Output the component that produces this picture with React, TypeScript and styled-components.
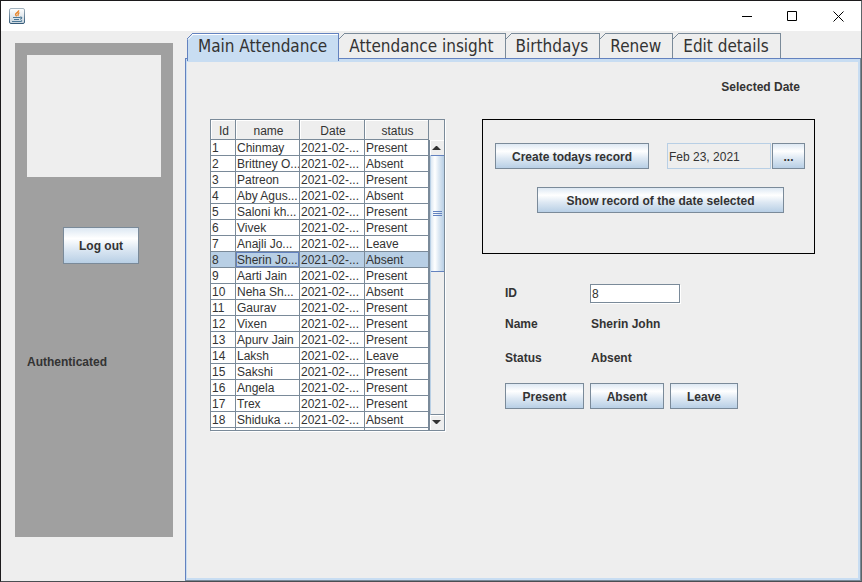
import React, { useState } from "react";
import styled, { createGlobalStyle, css } from "styled-components";

const line = "#7a8a99";
const blue = "#6382bf";
const panel = "#eeeeee";
const ink = "#333333";
const selection = "#b8cfe5";
const tabFill = "#c8ddf2";

const GlobalStyle = createGlobalStyle`
  *, *::before, *::after { box-sizing: border-box; }
  body { margin: 0; background: ${panel}; }
  body, button, input { font: 12px/16px "Liberation Sans", Arial, sans-serif; color: ${ink}; }
  button { cursor: default; }
`;

const Window = styled.div`
  display: flex;
  flex-direction: column;
  min-height: 100vh;
  background: ${panel};
  border: 1px solid #1c1a1c;
  border-right-color: #5c6468;
  border-bottom-color: #4a4e52;
`;

const TitleBar = styled.header`
  display: flex;
  align-items: center;
  justify-content: space-between;
  height: 30px;
  padding-left: 8px;
  background: #ffffff;
`;

const WindowButtons = styled.div`
  display: flex;
`;

const WindowButton = styled.button`
  display: flex;
  align-items: center;
  justify-content: center;
  width: 46px;
  height: 30px;
  padding: 0;
  border: 0;
  background: transparent;
`;

const Body = styled.div`
  display: flex;
  flex: 1;
`;

const Sidebar = styled.aside`
  display: flex;
  flex-direction: column;
  flex: none;
  width: 158px;
  margin: 12px 12px 44px 14px;
  padding: 12px;
  background: #a0a0a0;
`;

const Photo = styled.div`
  height: 122px;
  margin-bottom: 50px;
  background: ${panel};
`;

const AuthStatus = styled.p`
  margin: 90px 0 0;
  font-weight: bold;
`;

const Button = styled.button<{ $width: number; $tall?: boolean }>`
  flex: none;
  width: ${(p) => p.$width}px;
  height: ${(p) => (p.$tall ? 37 : 26)}px;
  padding: ${(p) => (p.$tall ? 0 : 2)}px 0 0;
  border: 1px solid ${line};
  background: linear-gradient(#dde8f3, #ffffff 30%, #dde8f3 60%, #b8cfe5);
  font-weight: bold;
`;

const LogOutButton = styled(Button)`
  margin-left: 36px;
`;

const Main = styled.main`
  display: flex;
  flex-direction: column;
  flex: 1;
  min-width: 0;
  padding-top: 2px;
`;

const TabList = styled.div`
  display: flex;
  padding-left: 2px;
`;

const Tab = styled.button<{ $active: boolean }>`
  position: relative;
  height: 25px;
  padding: 0 11px 0 10px;
  border: 0;
  border-top: 1px solid ${line};
  border-right: 1px solid ${line};
  background: ${panel};
  font: 17px/24px "DejaVu Sans Condensed", "Noto Sans", sans-serif;
  white-space: nowrap;
  ${(p) =>
    p.$active &&
    css`
      z-index: 1;
      height: 28px;
      margin-bottom: -3px;
      padding-bottom: 3px;
      border-color: ${blue};
      background: ${tabFill};
      box-shadow: inset 0 1px #ffffff;
    `}
  &:first-child {
    border-left: 1px solid ${blue};
  }
`;

const TabCorner = styled.svg<{ $first: boolean }>`
  position: absolute;
  top: -1px;
  left: ${(p) => (p.$first ? -1 : 0)}px;
`;

const Pane = styled.section`
  flex: 1;
  padding: 16px 45px 16px 24px;
  border: 1px solid ${blue};
  border-right-color: ${line};
  border-bottom-color: ${line};
  box-shadow: inset 1px 0 ${tabFill}, inset 0 3px ${tabFill}, inset -2px -2px ${tabFill};
`;

const SelectedDate = styled.h2`
  margin: 4px 15px 24px 0;
  font-size: 12px;
  line-height: 16px;
  text-align: right;
`;

const Columns = styled.div`
  display: grid;
  grid-template-columns: 235px minmax(333px, 1fr);
  gap: 37px;
  align-items: start;
`;

const ScrollPane = styled.div`
  display: grid;
  grid-template-columns: 218px 15px;
  height: 312px;
  overflow: hidden;
  border: 1px solid ${line};
  box-shadow: 1px 1px #ffffff;
`;

const Viewport = styled.div`
  overflow: hidden;
  background: #ffffff;
`;

const Table = styled.table`
  width: 100%;
  table-layout: fixed;
  border-collapse: separate;
  border-spacing: 0;
`;

const Col = styled.col<{ $width: number }>`
  width: ${(p) => p.$width}px;
`;

const HeadCell = styled.th`
  height: 20px;
  padding: 2px 0 0 2px;
  border-right: 1px solid ${line};
  border-bottom: 1px solid ${line};
  background: ${panel};
  box-shadow: inset 1px 1px #ffffff;
  font-weight: normal;
  line-height: 16px;
`;

const Row = styled.tr<{ $selected: boolean }>`
  background: ${(p) => (p.$selected ? selection : "#ffffff")};
`;

const Cell = styled.td<{ $focused?: boolean }>`
  height: 16px;
  padding: 2px 0 0 1px;
  border-right: 1px solid ${line};
  border-bottom: 1px solid ${line};
  line-height: 13px;
  white-space: nowrap;
  overflow: hidden;
  box-shadow: ${(p) => (p.$focused ? `inset 0 0 0 1px ${blue}` : "none")};
`;

const ScrollColumn = styled.div`
  display: flex;
  flex-direction: column;
  min-height: 0;
`;

const ScrollCorner = styled.div`
  flex: none;
  height: 20px;
`;

const ScrollBar = styled.div`
  display: flex;
  flex-direction: column;
  flex: 1;
  border-left: 1px solid ${line};
`;

const ScrollButton = styled.button`
  display: flex;
  align-items: center;
  justify-content: center;
  height: 15px;
  padding: 0 1px 0 0;
  border: 0;
  background: ${panel};
  box-shadow: inset 1px 1px #ffffff;
`;

const ScrollTrack = styled.div`
  flex: 1;
  border-bottom: 1px solid ${line};
  border-left: 1px solid ${selection};
`;

const ScrollThumb = styled.div`
  display: flex;
  flex-direction: column;
  align-items: center;
  justify-content: center;
  gap: 1px;
  height: 117px;
  border: solid ${blue};
  border-width: 1px 0;
  background: linear-gradient(to right, #dde8f3, #ffffff 30%, #dde8f3 60%, #b8cfe5);
`;

const Grip = styled.span`
  width: 9px;
  height: 1px;
  background: ${blue};
`;

const RecordBox = styled.div`
  display: flex;
  flex-direction: column;
  gap: 18px;
  height: 135px;
  padding: 23px 9px 0 12px;
  border: 1px solid #000000;
`;

const SpreadRow = styled.div`
  display: flex;
  justify-content: space-between;
`;

const ShowRow = styled.div`
  display: flex;
  justify-content: flex-end;
  padding-right: 21px;
`;

const DatePicker = styled.div`
  display: flex;
  gap: 1px;
`;

const DateInput = styled.input`
  width: 104px;
  height: 26px;
  padding: 2px 1px 0;
  border: 1px solid ${selection};
  background: ${panel};
`;

const Form = styled.form`
  display: grid;
  grid-template-columns: 85px 1fr;
  grid-template-rows: 20px 42px 26px;
  align-items: center;
  margin: 29px 0 0 23px;
  font-weight: bold;
`;

const IdInput = styled.input`
  width: 90px;
  height: 19px;
  padding: 2px 1px 0;
  border: 1px solid ${line};
  background: #ffffff;
  box-shadow: 1px 1px #ffffff;
`;

const Value = styled.output`
  padding-left: 1px;
`;

const Actions = styled.div`
  display: flex;
  gap: 6px;
  margin: 12px 0 0 23px;
`;

const JavaIcon = () => (
  <svg width="16" height="16" viewBox="0 0 16 16" aria-hidden="true">
    <defs>
      <linearGradient id="plate" x1="0" y1="0" x2="0" y2="1">
        <stop offset="0" stopColor="#ffffff" />
        <stop offset="1" stopColor="#c9d5de" />
      </linearGradient>
      <linearGradient id="rim" x1="0" y1="0" x2="0" y2="1">
        <stop offset="0" stopColor="#a3b3bf" />
        <stop offset="1" stopColor="#355a78" />
      </linearGradient>
    </defs>
    <rect x=".5" y=".5" width="15" height="15" rx="1.5" fill="url(#plate)" stroke="url(#rim)" />
    <path d="M9.6 2.2C10.4 4 6.4 4.9 6.6 6.5c.1.8.7 1.2 1 1.9M10.4 4.6C8.2 5.4 9.8 6.6 8.7 8" fill="none" stroke="#e8862c" strokeWidth="1.4" />
    <path d="M4 9.5h7M5 11.5h5M11 9.3c2.4-.8 2.4 1.4 0 2M3 13.5h9l1-1" fill="none" stroke="#4c7896" strokeWidth="1.1" />
  </svg>
);

const Glyph = ({ d }: { d: string }) => (
  <svg width="11" height="11" viewBox="0 0 11 11" aria-hidden="true">
    <path d={d} fill="none" stroke="#000000" />
  </svg>
);

const Corner = ({ first, active }: { first: boolean; active: boolean }) => (
  <TabCorner $first={first} width="7" height="7" viewBox="0 0 7 7" aria-hidden="true">
    <path d="M0 0H6L0 6Z" fill={panel} />
    {active && <path d="M1 6.5L6.5 1" stroke="#ffffff" />}
    <path d="M0 6L6 0" stroke={active ? blue : line} />
  </TabCorner>
);

const windowButtons = [
  { label: "Minimize", d: "M1 5.5h10" },
  { label: "Maximize", d: "M.5 .5h9v9h-9z" },
  { label: "Close", d: "M.5 .5l10 10M10.5 .5l-10 10" },
];

const tabs = ["Main Attendance", "Attendance insight", "Birthdays", "Renew", "Edit details"];

const records: [string, string][] = [
  ["Chinmay", "Present"],
  ["Brittney O...", "Absent"],
  ["Patreon", "Present"],
  ["Aby Agus...", "Absent"],
  ["Saloni kh...", "Present"],
  ["Vivek", "Present"],
  ["Anajli Jo...", "Leave"],
  ["Sherin Jo...", "Absent"],
  ["Aarti Jain", "Present"],
  ["Neha Sh...", "Absent"],
  ["Gaurav", "Present"],
  ["Vixen", "Present"],
  ["Apurv Jain", "Present"],
  ["Laksh", "Leave"],
  ["Sakshi", "Present"],
  ["Angela", "Present"],
  ["Trex", "Present"],
  ["Shiduka ...", "Absent"],
  ["", ""],
];

export default function App() {
  const [tab, setTab] = useState(0);
  const [selected, setSelected] = useState(7);

  return (
    <>
      <GlobalStyle />
      <Window>
        <TitleBar>
          <JavaIcon />
          <WindowButtons>
            {windowButtons.map((b) => (
              <WindowButton key={b.label} aria-label={b.label}>
                <Glyph d={b.d} />
              </WindowButton>
            ))}
          </WindowButtons>
        </TitleBar>
        <Body>
          <Sidebar>
            <Photo />
            <LogOutButton $width={76} $tall>Log out</LogOutButton>
            <AuthStatus>Authenticated</AuthStatus>
          </Sidebar>
          <Main>
            <TabList role="tablist">
              {tabs.map((name, i) => (
                <Tab key={name} role="tab" aria-selected={i === tab} $active={i === tab} onClick={() => setTab(i)}>
                  <Corner first={i === 0} active={i === tab} />
                  {name}
                </Tab>
              ))}
            </TabList>
            <Pane role="tabpanel">
              <SelectedDate>Selected Date</SelectedDate>
              <Columns>
                <ScrollPane>
                  <Viewport>
                    <Table>
                      <colgroup>
                        <Col $width={25} />
                        <Col $width={64} />
                        <Col $width={65} />
                        <Col $width={64} />
                      </colgroup>
                      <thead>
                        <tr>
                          {["Id", "name", "Date", "status"].map((h) => (
                            <HeadCell key={h} scope="col">{h}</HeadCell>
                          ))}
                        </tr>
                      </thead>
                      <tbody>
                        {records.map(([name, status], i) => (
                          <Row key={i} $selected={i === selected} onClick={() => setSelected(i)}>
                            <Cell>{name && i + 1}</Cell>
                            <Cell $focused={i === selected}>{name}</Cell>
                            <Cell>{name && "2021-02-..."}</Cell>
                            <Cell>{status}</Cell>
                          </Row>
                        ))}
                      </tbody>
                    </Table>
                  </Viewport>
                  <ScrollColumn>
                    <ScrollCorner />
                    <ScrollBar>
                      <ScrollButton aria-label="Scroll up">
                        <svg width="9" height="5" viewBox="0 0 9 5" aria-hidden="true">
                          <path d="M0 5L4 1h1l4 4z" fill={ink} />
                        </svg>
                      </ScrollButton>
                      <ScrollTrack>
                        <ScrollThumb>
                          <Grip />
                          <Grip />
                          <Grip />
                        </ScrollThumb>
                      </ScrollTrack>
                      <ScrollButton aria-label="Scroll down">
                        <svg width="9" height="5" viewBox="0 0 9 5" aria-hidden="true">
                          <path d="M0 0l4 4h1l4-4z" fill={ink} />
                        </svg>
                      </ScrollButton>
                    </ScrollBar>
                  </ScrollColumn>
                </ScrollPane>
                <div>
                  <RecordBox>
                    <SpreadRow>
                      <Button $width={154}>Create todays record</Button>
                      <DatePicker>
                        <DateInput aria-label="Date" defaultValue="Feb 23, 2021" />
                        <Button $width={33}>...</Button>
                      </DatePicker>
                    </SpreadRow>
                    <ShowRow>
                      <Button $width={247}>Show record of the date selected</Button>
                    </ShowRow>
                  </RecordBox>
                  <Form onSubmit={(e) => e.preventDefault()}>
                    <label htmlFor="record-id">ID</label>
                    <IdInput id="record-id" defaultValue="8" />
                    <label htmlFor="record-name">Name</label>
                    <Value id="record-name">Sherin John</Value>
                    <label htmlFor="record-status">Status</label>
                    <Value id="record-status">Absent</Value>
                  </Form>
                  <Actions>
                    <Button $width={79}>Present</Button>
                    <Button $width={74}>Absent</Button>
                    <Button $width={68}>Leave</Button>
                  </Actions>
                </div>
              </Columns>
            </Pane>
          </Main>
        </Body>
      </Window>
    </>
  );
}
